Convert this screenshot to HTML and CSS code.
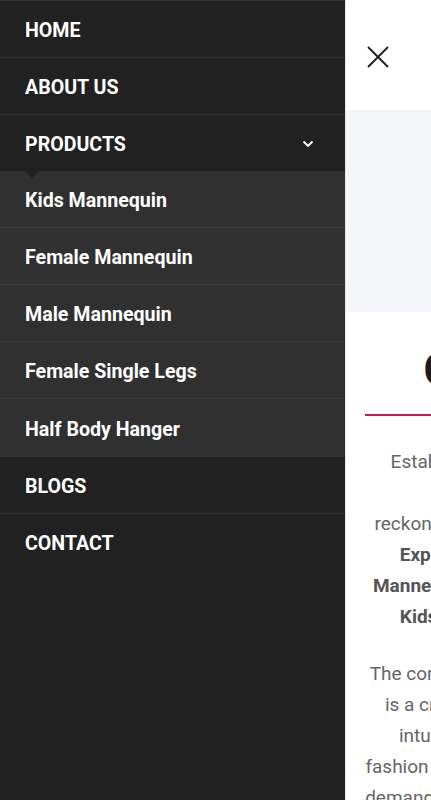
FILE: index.html
```html
<!DOCTYPE html>
<html lang="en">
<head>
    <meta charset="UTF-8">
    <meta name="viewport" content="width=device-width, initial-scale=1.0">
    <title>About Us - Mannequins</title>
    <link rel="stylesheet" href="styles.css">
</head>
<body>
    <div class="container">
        <nav class="sidebar" id="sidebar">
            <ul class="menu">
                <li><a href="#">HOME</a></li>
                <li><a href="#">ABOUT US</a></li>
                <li class="has-sub open">
                    <a href="#">PRODUCTS
                        <svg class="chevron" width="12" height="8" viewBox="0 0 12 8"><path d="M1.5 1.5 L6 6 L10.5 1.5" fill="none" stroke="#fff" stroke-width="1.8"/></svg>
                    </a>
                    <ul class="sub-menu">
                        <li><a href="#">Kids Mannequin</a></li>
                        <li><a href="#">Female Mannequin</a></li>
                        <li><a href="#">Male Mannequin</a></li>
                        <li><a href="#">Female Single Legs</a></li>
                        <li><a href="#">Half Body Hanger</a></li>
                    </ul>
                </li>
                <li><a href="#">BLOGS</a></li>
                <li><a href="#">CONTACT</a></li>
            </ul>
        </nav>
        <main class="page">
            <div class="page-inner">
                <header class="top-bar">
                    <button class="close-btn" onclick="toggleSidebar()">
                        <svg width="22" height="22" viewBox="0 0 22 22"><path d="M1 1 L21 21 M21 1 L1 21" stroke="#222" stroke-width="2" fill="none"/></svg>
                    </button>
                </header>
                <div class="banner"></div>
                <section class="about">
                    <h1>Company Info</h1>
                    <div class="divider"></div>
                    <p>Established in 2012, Mannequin Hub is a<br>
                    leading name that is<br>
                    reckoned as a prominent Manufacturers and<br>
                    <strong>Exporter of Female Mannequins, Male<br>
                    Mannequins, Female Single Legs, Half Body,<br>
                    Kids Mannequin and Display Hangers.</strong></p>
                    <p>The company, with its skilled team of experts,<br>
                    is a creative force that understands all the<br>
                    intuitive needs of today's modern retail<br>
                    fashion and retail industry to meet the growing<br>
                    demands of the customers across the country.</p>
                </section>
            </div>
        </main>
    </div>

    <script>
        function toggleSidebar() {
            document.getElementById('sidebar').classList.toggle('hidden');
        }
    </script>
</body>
</html>
```

FILE: styles.css
```css
body {
    margin: 0;
    height: 100vh;
    font-family: Roboto, "Liberation Sans", Arial, sans-serif;
    overflow: hidden;
}

.container {
    display: flex;
    height: 100%;
    width: 100%;
}

.sidebar {
    width: 345px;
    flex-shrink: 0;
    background-color: #212121;
    height: 100%;
}

.sidebar.hidden {
    display: none;
}

.menu, .sub-menu {
    list-style: none;
    margin: 0;
    padding: 0;
}

.menu {
    border-top: 1px solid #2f2f2f;
}

.menu > li {
    border-bottom: 1px solid #2f2f2f;
}

.menu > li:last-child,
.menu > li.has-sub {
    border-bottom: none;
}

.menu a {
    display: flex;
    align-items: center;
    justify-content: space-between;
    box-sizing: border-box;
    height: 56px;
    padding: 2px 31px 0 25px;
    color: #ffffff;
    text-decoration: none;
    font-size: 19.6px;
    font-weight: bold;
}

.chevron {
    margin-top: -1px;
}

.sub-menu {
    position: relative;
    background-color: #303030;
}

/* little notch under the parent item */
.sub-menu::before {
    content: "";
    position: absolute;
    top: 0;
    left: 25px;
    border-left: 7px solid transparent;
    border-right: 7px solid transparent;
    border-top: 7px solid #212121;
}

.sub-menu li {
    border-bottom: 1px solid #3a3a3a;
}

.sub-menu li:last-child {
    border-bottom: none;
}

.sub-menu li:last-child a {
    height: 58px;
}

.page {
    flex: 1;
    overflow: hidden;
    background-color: #ffffff;
    border-left: 1px solid #e6e6e6;
}

.page-inner {
    width: 431px;
}

.top-bar {
    height: 110px;
    box-sizing: border-box;
    padding: 46px 0 0 21px;
}

.close-btn {
    display: block;
    background: none;
    border: none;
    padding: 0;
    width: 22px;
    height: 22px;
    cursor: pointer;
}

.banner {
    height: 202px;
    background-color: #f4f6f9;
}

.about {
    padding: 32px 19px 0 19px;
    text-align: center;
}

.about h1 {
    margin: 0;
    font-size: 44px;
    line-height: 1.2;
    font-weight: bold;
    color: #1c1c1c;
}

.divider {
    height: 2px;
    background-color: #c2185b;
    margin: 17px 0 30px 0;
}

.about p {
    margin: 0 0 26px 0;
    font-size: 19px;
    line-height: 31px;
    color: #666666;
    white-space: nowrap;
}

.about strong {
    color: #555555;
}
```
